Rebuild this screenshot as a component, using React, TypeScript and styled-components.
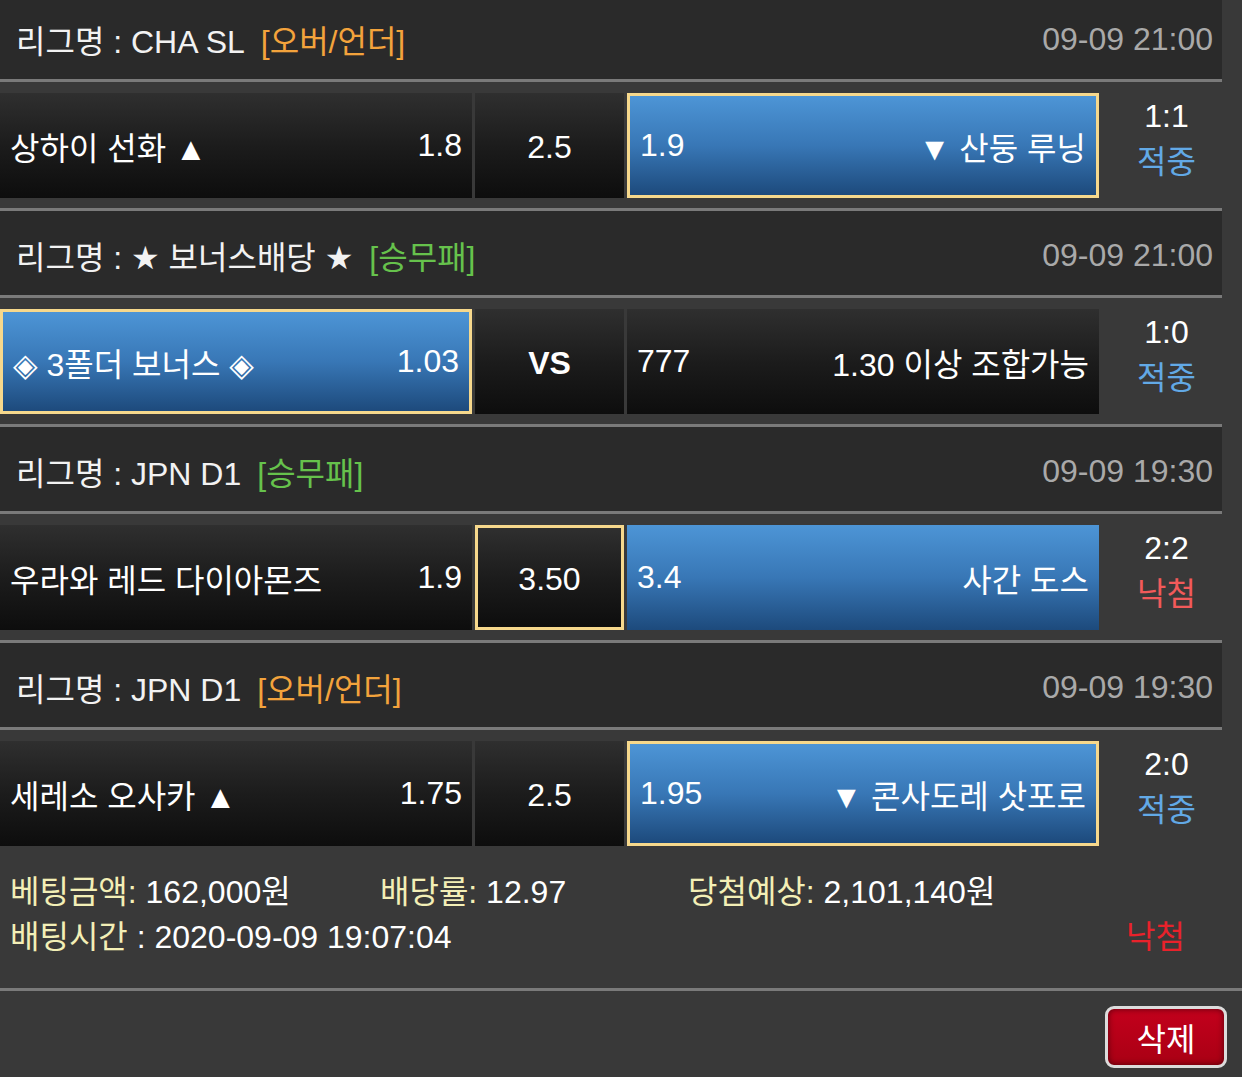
import React from 'react';
import styled, { createGlobalStyle } from 'styled-components';

const GlobalStyle = createGlobalStyle`
  html, body {
    margin: 0;
    padding: 0;
    background: #393939;
  }
  body {
    font-family: "Liberation Sans", "DejaVu Sans", "Noto Sans CJK KR", sans-serif;
    font-size: 32px;
    color: #ffffff;
    font-feature-settings: "palt";
    overflow: hidden;
  }
`;

const LINE = '#7a7a7a';

const Page = styled.div`
  width: 1242px;
  margin-top: -5px;
`;

const List = styled.div`
  width: 1222px;
`;

const Group = styled.section``;

const Header = styled.div`
  height: 80px;
  padding: 4px 9px 0 16px;
  background: #2a2a2a;
  border-bottom: 3px solid ${LINE};
  display: flex;
  align-items: center;
  justify-content: space-between;
  white-space: nowrap;
`;

const League = styled.div`
  color: #f2f2f2;
`;

const Tag = styled.span<{ $color: string }>`
  color: ${(p) => p.$color};
  margin-left: 16px;
`;

const DateText = styled.div`
  color: #a9a9a9;
`;

const MatchRow = styled.div<{ $last?: boolean }>`
  display: grid;
  grid-template-columns: 472px 149px 472px 1fr;
  grid-template-rows: 105px;
  column-gap: 3px;
  padding: 11px 0 10px;
  border-bottom: ${(p) => (p.$last ? 'none' : `3px solid ${LINE}`)};
`;

const Cell = styled.div<{ $blue?: boolean; $selected?: boolean; $center?: boolean }>`
  box-sizing: border-box;
  height: 105px;
  display: flex;
  align-items: center;
  justify-content: ${(p) => (p.$center ? 'center' : 'space-between')};
  padding: ${(p) => (p.$center ? '4px 0 0' : '0 10px')};
  background: ${(p) =>
    p.$blue
      ? 'linear-gradient(to bottom, #4d95d6 0%, #3877b6 50%, #1d4a7c 100%)'
      : 'linear-gradient(to bottom, #2f2f2f 0%, #1c1c1c 50%, #0d0d0d 100%)'};
  border: ${(p) => (p.$selected ? '3px solid #f6d88c' : 'none')};
  white-space: nowrap;
`;

const Vs = styled.span`
  font-weight: 700;
`;

const Result = styled.div`
  box-sizing: border-box;
  height: 105px;
  display: flex;
  flex-direction: column;
  align-items: center;
  justify-content: center;
  padding: 0 0 13px 9px;
  line-height: 46px;
`;

const Score = styled.div`
  color: #ffffff;
`;

const Status = styled.div<{ $win: boolean }>`
  color: ${(p) => (p.$win ? '#62a9e6' : '#f25a5a')};
`;

const Summary = styled.div`
  padding: 14px 57px 28px 10px;
  border-bottom: 3px solid ${LINE};
  line-height: 45px;
  white-space: nowrap;
`;

const SummaryTop = styled.div`
  display: grid;
  grid-template-columns: 370px 308px auto;
`;

const SummaryBottom = styled.div`
  display: flex;
  justify-content: space-between;
`;

const Label = styled.span`
  color: #f3efb6;
`;

const Value = styled.span`
  color: #ffffff;
`;

const Lost = styled.span`
  color: #e8222b;
`;

const Footer = styled.div`
  display: flex;
  justify-content: flex-end;
  padding: 15px 15px 20px;
`;

const DeleteButton = styled.button`
  box-sizing: border-box;
  width: 122px;
  height: 62px;
  border: 3px solid #dcdcdc;
  border-radius: 9px;
  background: linear-gradient(to bottom, #c3001c, #a90014);
  box-shadow: inset 0 0 6px rgba(0, 0, 0, 0.55);
  color: #ffffff;
  font-family: inherit;
  font-size: 32px;
  font-feature-settings: "palt";
  padding: 0;
  cursor: pointer;
`;

type Side = 'left' | 'mid' | 'right';

interface Match {
  league: string;
  tag: string;
  tagColor: string;
  date: string;
  leftName: string;
  leftOdds: string;
  mid: string;
  midBold?: boolean;
  rightOdds: string;
  rightName: string;
  selected: Side;
  winner: Side;
  score: string;
  win: boolean;
}

const ORANGE = '#f3a33c';
const GREEN = '#66c24c';

const matches: Match[] = [
  {
    league: 'CHA SL',
    tag: '[오버/언더]',
    tagColor: ORANGE,
    date: '09-09 21:00',
    leftName: '상하이 선화 ▲',
    leftOdds: '1.8',
    mid: '2.5',
    rightOdds: '1.9',
    rightName: '▼ 산둥 루닝',
    selected: 'right',
    winner: 'right',
    score: '1:1',
    win: true,
  },
  {
    league: '★ 보너스배당 ★',
    tag: '[승무패]',
    tagColor: GREEN,
    date: '09-09 21:00',
    leftName: '◈ 3폴더 보너스 ◈',
    leftOdds: '1.03',
    mid: 'VS',
    midBold: true,
    rightOdds: '777',
    rightName: '1.30 이상 조합가능',
    selected: 'left',
    winner: 'left',
    score: '1:0',
    win: true,
  },
  {
    league: 'JPN D1',
    tag: '[승무패]',
    tagColor: GREEN,
    date: '09-09 19:30',
    leftName: '우라와 레드 다이아몬즈',
    leftOdds: '1.9',
    mid: '3.50',
    rightOdds: '3.4',
    rightName: '사간 도스',
    selected: 'mid',
    winner: 'right',
    score: '2:2',
    win: false,
  },
  {
    league: 'JPN D1',
    tag: '[오버/언더]',
    tagColor: ORANGE,
    date: '09-09 19:30',
    leftName: '세레소 오사카 ▲',
    leftOdds: '1.75',
    mid: '2.5',
    rightOdds: '1.95',
    rightName: '▼ 콘사도레 삿포로',
    selected: 'right',
    winner: 'right',
    score: '2:0',
    win: true,
  },
];

export default function App() {
  return (
    <>
      <GlobalStyle />
      <Page>
        <List>
          {matches.map((m, i) => (
            <Group key={i}>
              <Header>
                <League>
                  리그명 : {m.league}
                  <Tag $color={m.tagColor}>{m.tag}</Tag>
                </League>
                <DateText>{m.date}</DateText>
              </Header>
              <MatchRow $last={i === matches.length - 1}>
                <Cell $blue={m.winner === 'left'} $selected={m.selected === 'left'}>
                  <span>{m.leftName}</span>
                  <span>{m.leftOdds}</span>
                </Cell>
                <Cell $center $blue={m.winner === 'mid'} $selected={m.selected === 'mid'}>
                  {m.midBold ? <Vs>{m.mid}</Vs> : <span>{m.mid}</span>}
                </Cell>
                <Cell $blue={m.winner === 'right'} $selected={m.selected === 'right'}>
                  <span>{m.rightOdds}</span>
                  <span>{m.rightName}</span>
                </Cell>
                <Result>
                  <Score>{m.score}</Score>
                  <Status $win={m.win}>{m.win ? '적중' : '낙첨'}</Status>
                </Result>
              </MatchRow>
            </Group>
          ))}
        </List>
        <Summary>
          <SummaryTop>
            <span>
              <Label>베팅금액:</Label> <Value>162,000원</Value>
            </span>
            <span>
              <Label>배당률:</Label> <Value>12.97</Value>
            </span>
            <span>
              <Label>당첨예상:</Label> <Value>2,101,140원</Value>
            </span>
          </SummaryTop>
          <SummaryBottom>
            <span>
              <Label>배팅시간</Label> <Value>: 2020-09-09 19:07:04</Value>
            </span>
            <Lost>낙첨</Lost>
          </SummaryBottom>
        </Summary>
        <Footer>
          <DeleteButton type="button">삭제</DeleteButton>
        </Footer>
      </Page>
    </>
  );
}
